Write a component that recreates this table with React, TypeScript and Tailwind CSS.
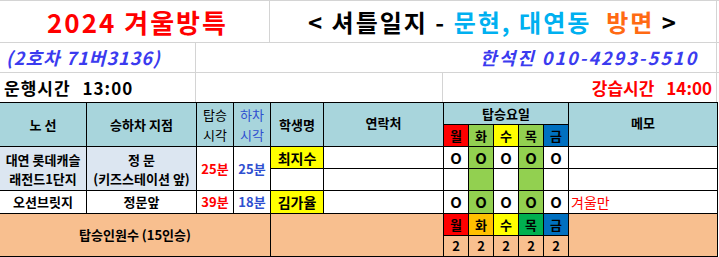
const teal = "bg-[#a8d5dc]"

function Cell({ className = "", children }: { className?: string; children?: React.ReactNode }) {
  return <div className={`flex items-center justify-center text-center leading-[16px] ${className}`}>{children}</div>
}

export default function App() {
  const days = ["월", "화", "수", "목", "금"]
  const headDay = ["bg-[#ff0000]", "bg-[#92d050]", "bg-[#ffff00]", "bg-[#92d050]", "bg-[#0070c0]"]
  const footDay = ["bg-[#ff0000]", "bg-[#ffc000]", "bg-[#ffff00]", "bg-[#00b050]", "bg-[#0070c0]"]
  const dataDay = ["bg-white", "bg-[#92d050]", "bg-white", "bg-[#92d050]", "bg-white"]

  return (
    <div className="w-[719px] h-[257px] bg-white overflow-hidden font-['Noto_Sans_CJK_KR',sans-serif] text-black">
      {/* 상단 제목 */}
      <div className="flex h-[43px] border-y border-[#d4d4d4]">
        <div className="w-[270px] flex items-center justify-center border-r border-[#d4d4d4] pl-[6px] text-[26px] tracking-[2px] font-bold text-[#ff0000]">
          2024 겨울방특
        </div>
        <div className="w-[447px] flex items-center justify-center border-r border-[#d4d4d4]">
          <span className="text-[24px] tracking-[2px] font-bold whitespace-pre">
            {"< 셔틀일지 - "}
            <span className="text-[#00b0f0]">문현, 대연동</span>
            {"  "}
            <span className="text-[#ff6a13]">방면</span>
            {" >"}
          </span>
        </div>
      </div>
      <div className="flex h-[30px] border-b border-[#d4d4d4]">
        <div className="w-[196px] flex items-center pl-[6px] border-r border-[#d4d4d4] text-[18px] tracking-[1px] font-bold italic text-[#3b3bef]">
          (2호차 71버3136)
        </div>
        <div className="w-[521px] flex items-center justify-end pr-[18px] border-r border-[#d4d4d4] text-[18px] tracking-[2px] font-bold italic text-[#3b3bef]">
          한석진 010-4293-5510
        </div>
      </div>
      <div className="flex h-[29px]">
        <div className="w-[196px] flex items-center pl-[4px] border-r border-[#d4d4d4] text-[17px] font-bold tracking-[1px]">
          <span>운행시간</span>
          <span className="ml-[12px]">13:00</span>
        </div>
        <div className="w-[247px] border-r border-[#d4d4d4]" />
        <div className="w-[274px] flex items-center justify-end pr-[4px] border-r border-[#d4d4d4] text-[17px] font-bold text-[#ff0000]">
          <span>강습시간</span>
          <span className="ml-[12px]">14:00</span>
        </div>
      </div>

      {/* 표 */}
      <div className="grid w-[718px] bg-black gap-px pt-px pr-px pb-px grid-cols-[86px_109px_36px_36px_52px_119px_24px_24px_24px_24px_24px_148px] grid-rows-[21px_21px_21px_21px_22px_21px_20px] text-[13px]">
        <Cell className={`${teal} row-span-2 font-bold`}>노 선</Cell>
        <Cell className={`${teal} row-span-2 font-bold`}>승하차 지점</Cell>
        <Cell className={`${teal} row-span-2 !leading-[20px]`}>탑승<br />시각</Cell>
        <Cell className={`${teal} row-span-2 !leading-[20px] text-[#2f4fd0]`}>하차<br />시각</Cell>
        <Cell className={`${teal} row-span-2 font-bold`}>학생명</Cell>
        <Cell className={`${teal} row-span-2 font-bold pb-[4px]`}>연락처</Cell>
        <Cell className={`${teal} col-span-5 font-bold`}>탑승요일</Cell>
        <Cell className={`${teal} row-span-2 font-bold pb-[4px]`}>메모</Cell>
        {days.map((d, i) => (
          <Cell key={"h" + d} className={`${headDay[i]} font-bold`}>{d}</Cell>
        ))}

        {/* 대연 롯데캐슬 */}
        <Cell className="bg-[#dce6f1] row-span-2 font-bold !leading-[19px]">대연 롯데캐슬<br />래전드1단지</Cell>
        <Cell className="bg-[#dce6f1] row-span-2 font-bold !leading-[19px]">정 문<br />(키즈스테이션 앞)</Cell>
        <Cell className="bg-white row-span-2 font-bold text-[#ff0000]">25분</Cell>
        <Cell className="bg-white row-span-2 font-bold text-[#2f4fd0]">25분</Cell>
        <Cell className="bg-[#ffff00] font-bold text-[14px]">최지수</Cell>
        <Cell className="bg-white" />
        {days.map((d, i) => (
          <Cell key={"a" + d} className={`${dataDay[i]} font-bold text-[15px]`}>O</Cell>
        ))}
        <Cell className="bg-white" />
        <Cell className="bg-white" />
        <Cell className="bg-white" />
        {days.map((d, i) => (
          <Cell key={"b" + d} className={dataDay[i]} />
        ))}
        <Cell className="bg-white" />

        {/* 오션브릿지 */}
        <Cell className="bg-white font-bold">오션브릿지</Cell>
        <Cell className="bg-white font-bold">정문앞</Cell>
        <Cell className="bg-white font-bold text-[#ff0000]">39분</Cell>
        <Cell className="bg-white font-bold text-[#2f4fd0]">18분</Cell>
        <Cell className="bg-[#ffff00] font-bold text-[14px]">김가율</Cell>
        <Cell className="bg-white" />
        {days.map((d, i) => (
          <Cell key={"c" + d} className={`${dataDay[i]} font-bold text-[15px]`}>O</Cell>
        ))}
        <Cell className="bg-white !justify-start pl-[2px] text-[14px] text-[#ff0000]">겨울만</Cell>

        {/* 탑승인원 */}
        <Cell className="bg-[#f8bf8f] col-span-4 row-span-2 font-bold">탑승인원수 (15인승)</Cell>
        <Cell className="bg-[#f8bf8f] col-span-2 row-span-2" />
        {days.map((d, i) => (
          <Cell key={"f" + d} className={`${footDay[i]} font-bold`}>{d}</Cell>
        ))}
        <Cell className="bg-[#f8bf8f] row-span-2" />
        {days.map((d) => (
          <Cell key={"n" + d} className="bg-[#f8bf8f] font-bold">2</Cell>
        ))}
      </div>
    </div>
  )
}
